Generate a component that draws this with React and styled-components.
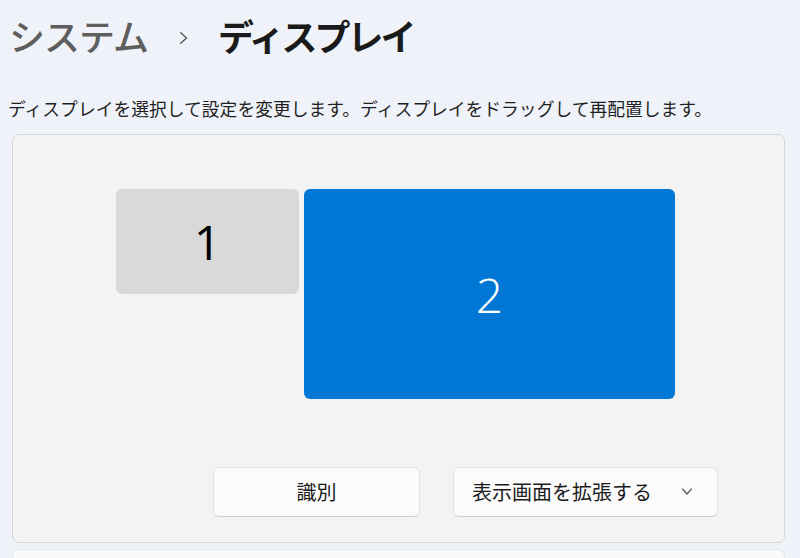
import React from "react";
import styled, { createGlobalStyle } from "styled-components";

const GlobalStyle = createGlobalStyle`
  html, body {
    margin: 0;
    padding: 0;
    background: #eff3f9;
    overflow: hidden;
  }
  body {
    font-family: "Noto Sans CJK JP", "Noto Sans", sans-serif;
  }
`;

const Page = styled.div`
  width: 800px;
  height: 558px;
  box-sizing: border-box;
  padding: 0 15px 0 12px;
  display: flex;
  flex-direction: column;
`;

const TitleRow = styled.div`
  display: flex;
  align-items: center;
  height: 70px;
  margin-left: -3px;
  font-size: 36px;
  letter-spacing: -1px;
`;

const Crumb = styled.span`
  color: ${(p) => (p.current ? "#1a1a1a" : "#5e5e5e")};
  font-weight: ${(p) => (p.current ? 700 : 500)};
  letter-spacing: ${(p) => (p.current ? "-3px" : "-1px")};
`;

const Sep = styled.span`
  display: inline-flex;
  width: 70px;
  justify-content: center;
  padding-top: 6px;
  color: #6a6a6a;
`;

const Description = styled.p`
  margin: 26px 0 14px -4px;
  font-size: 17.8px;
  line-height: 24px;
  color: #1f1f1f;
  white-space: nowrap;
`;

const Card = styled.section`
  box-sizing: border-box;
  height: 409px;
  background: #f3f3f3;
  border: 1px solid #d3d5d8;
  border-radius: 7px;
  display: flex;
  flex-direction: column;
`;

const Arrangement = styled.div`
  flex: 1;
  display: flex;
  justify-content: center;
  align-items: flex-start;
  gap: 5px;
  padding-top: 54px;
  padding-right: 6px;
`;

const Monitor = styled.div`
  width: ${(p) => p.w}px;
  height: ${(p) => p.h}px;
  border-radius: 6px;
  background: ${(p) => (p.selected ? "#0077d4" : "#d9d9d9")};
  color: ${(p) => (p.selected ? "#ffffff" : "#000000")};
  display: flex;
  align-items: center;
  justify-content: center;
  font-family: "Open Sans", "Noto Sans", sans-serif;
  font-weight: ${(p) => (p.selected ? 300 : 400)};
  font-size: 48px;
`;

const Actions = styled.div`
  display: flex;
  justify-content: flex-end;
  gap: 33px;
  padding: 0 66px 25px 0;
`;

const Button = styled.button`
  box-sizing: border-box;
  width: ${(p) => p.w}px;
  height: 50px;
  background: #fbfbfb;
  border: 1px solid #e2e2e2;
  border-bottom-color: #d2d2d2;
  border-radius: 6px;
  font-family: "Noto Sans CJK JP", sans-serif;
  font-size: 20px;
  color: #1c1c1c;
  display: flex;
  align-items: center;
  justify-content: ${(p) => (p.dropdown ? "space-between" : "center")};
  padding: ${(p) => (p.dropdown ? "0 24px 0 18px" : "0")};
  padding-bottom: 2px;
`;

const NextCard = styled.div`
  margin-top: 6px;
  flex: 1;
  background: #f9fafc;
  border: 1px solid #e4e6ea;
  border-bottom: none;
  border-radius: 7px 7px 0 0;
`;

function Chevron({ size = 12, color = "#5f5f5f", dir = "right" }) {
  const d = dir === "right" ? "M4 1.5 L9 6 L4 10.5" : "M1.5 4 L6 9 L10.5 4";
  return (
    <svg width={size} height={size} viewBox="0 0 12 12">
      <path d={d} fill="none" stroke={color} strokeWidth="1.2" strokeLinecap="round" strokeLinejoin="round" />
    </svg>
  );
}

export default function App() {
  return (
    <>
      <GlobalStyle />
      <Page>
        <TitleRow>
          <Crumb>システム</Crumb>
          <Sep>
            <Chevron size={14} color="#555" />
          </Sep>
          <Crumb current>ディスプレイ</Crumb>
        </TitleRow>
        <Description>
          ディスプレイを選択して設定を変更します。ディスプレイをドラッグして再配置します。
        </Description>
        <Card>
          <Arrangement>
            <Monitor w={183} h={105}>1</Monitor>
            <Monitor w={371} h={210} selected>2</Monitor>
          </Arrangement>
          <Actions>
            <Button w={207}>識別</Button>
            <Button w={265} dropdown>
              表示画面を拡張する
              <Chevron size={12} color="#555" dir="down" />
            </Button>
          </Actions>
        </Card>
        <NextCard />
      </Page>
    </>
  );
}
